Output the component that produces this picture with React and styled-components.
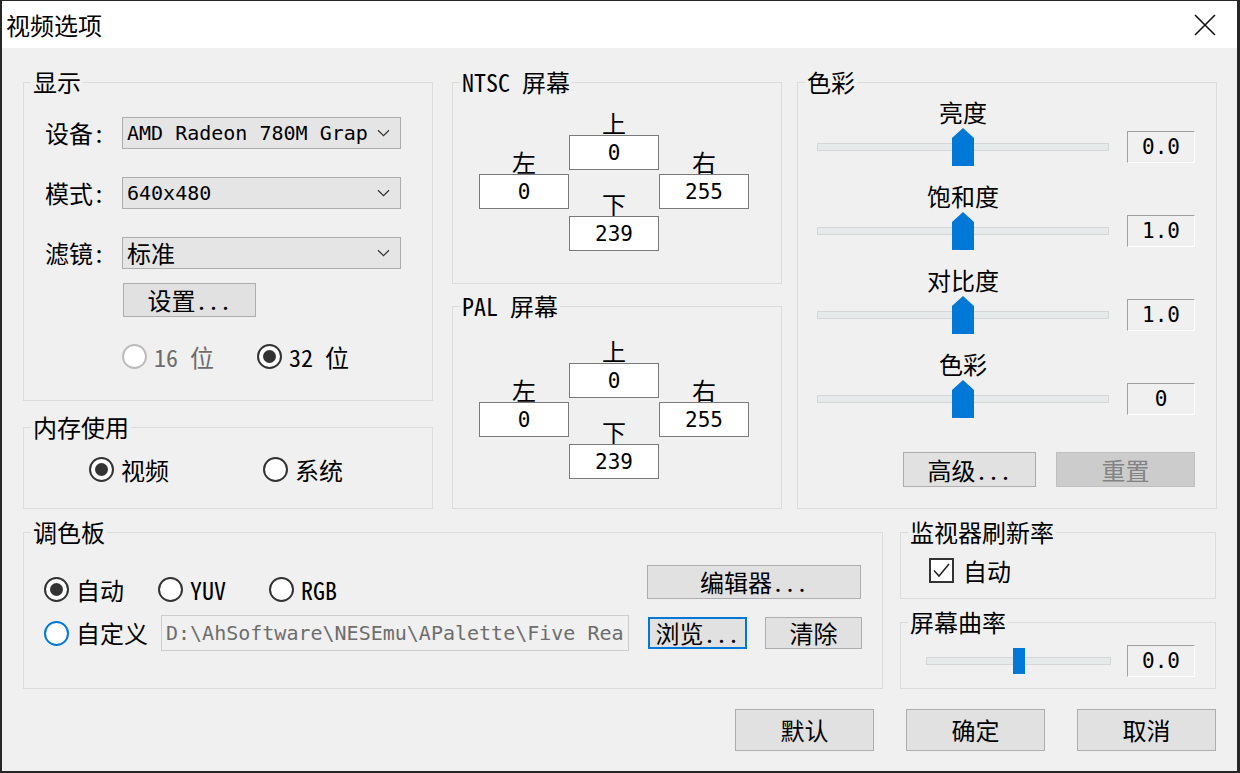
import React from "react";
import styled, { createGlobalStyle } from "styled-components";

const CJK = `"Noto Sans Mono CJK SC", "Noto Sans CJK SC", "DejaVu Sans Mono", monospace`;
const MONO = `"DejaVu Sans Mono", "Liberation Mono", monospace`;

const GlobalStyle = createGlobalStyle`
  *, *::before, *::after { box-sizing: border-box; }
  html, body { margin: 0; padding: 0; background: #262626; }
  #root { width: 1240px; height: 773px; }
`;

const Window = styled.div`
  width: 1240px;
  height: 773px;
  display: flex;
  flex-direction: column;
  background: #f0f0f0;
  border-style: solid;
  border-color: #262626;
  border-width: 1px 3px 2px 2px;
  font-family: ${CJK};
  font-size: 24px;
  line-height: 24px;
  color: #000;
`;

const TitleBar = styled.header`
  flex: none;
  height: 47px;
  display: flex;
  align-items: center;
  background: #fff;
  padding-left: 4px;
`;

const Caption = styled.h1`
  flex: 1;
  margin: 0;
  font: inherit;
`;

const CloseButton = styled.button`
  width: 64px;
  height: 47px;
  border: 0;
  padding: 0;
  background: transparent;
  display: flex;
  align-items: center;
  justify-content: center;
`;

const Content = styled.main`
  flex: 1;
  display: flex;
  flex-direction: column;
  padding: 22px 20px 0 21px;
`;

const Section = styled.div`
  display: flex;
  height: ${(p) => p.$height}px;
  margin-top: ${(p) => p.$mt || 0}px;
`;

const Column = styled.div`
  display: flex;
  flex-direction: column;
  width: ${(p) => p.$width}px;
  margin-left: ${(p) => p.$offset || 0}px;
  gap: ${(p) => p.$gap || 0}px;
`;

const Group = styled.fieldset`
  margin: 0;
  padding: 0;
  min-width: 0;
  border: 1px solid #dcdcdc;
  height: ${(p) => (p.$height ? `${p.$height}px` : "auto")};
  flex: ${(p) => (p.$height ? "none" : "1")};
`;

const Legend = styled.legend`
  margin-left: 7px;
  padding: 0 2px;
  line-height: 24px;
`;

const GroupBody = styled.div`
  display: flex;
  flex-direction: column;
  padding: ${(p) => p.$pad};
`;

/* ---------- generic controls ---------- */

const PushButton = styled.button`
  flex: none;
  width: ${(p) => p.$w}px;
  height: ${(p) => p.$h}px;
  margin: 0 0 0 ${(p) => p.$ml || 0}px;
  padding: 0;
  font: inherit;
  white-space: pre;
  color: ${(p) => (p.disabled ? "#838383" : "#000")};
  background: ${(p) => (p.disabled ? "#cccccc" : "#e1e1e1")};
  border: ${(p) =>
    p.$focused ? "2px solid #0078d7" : `1px solid ${p.disabled ? "#bfbfbf" : "#adadad"}`};
  display: flex;
  align-items: center;
  justify-content: center;
`;

const FieldRow = styled.div`
  display: flex;
  align-items: center;
  height: 32px;
  margin-top: ${(p) => p.$mt || 0}px;
`;

const FieldLabel = styled.span`
  width: 77px;
  flex: none;
`;

const Select = styled.div`
  width: 279px;
  height: 32px;
  display: flex;
  align-items: center;
  padding: 0 10px 0 4px;
  background: #e5e5e5;
  border: 1px solid #adadad;
`;

const SelectText = styled.span`
  flex: 1;
  white-space: pre;
  font-family: ${(p) => (p.$mono ? MONO : "inherit")};
  font-size: ${(p) => (p.$mono ? "20px" : "inherit")};
`;

const Chevron = () => (
  <svg width="13" height="8" viewBox="0 0 13 8">
    <path d="M1 1.2 L6.5 6.6 L12 1.2" fill="none" stroke="#333" strokeWidth="1.2" />
  </svg>
);

const RadioRow = styled.div`
  display: flex;
  align-items: center;
  margin: ${(p) => p.$margin || 0};
`;

const RadioItem = styled.label`
  flex: none;
  display: inline-flex;
  align-items: center;
  gap: 7px;
  width: ${(p) => (p.$w ? `${p.$w}px` : "auto")};
  white-space: pre;
  color: ${(p) => (p.$disabled ? "#6d6d6d" : "#000")};
`;

const RadioCircle = styled.span`
  flex: none;
  width: 25px;
  height: 25px;
  border-radius: 50%;
  background: #fff;
  border: 2px solid
    ${(p) => (p.$disabled ? "#bcbcbc" : p.$focus ? "#0078d7" : "#333")};
  display: flex;
  align-items: center;
  justify-content: center;

  &::after {
    content: "";
    width: 13px;
    height: 13px;
    border-radius: 50%;
    background: #333;
    display: ${(p) => (p.$checked ? "block" : "none")};
  }
`;

const Radio = ({ label, checked, disabled, focus, w }) => (
  <RadioItem $w={w} $disabled={disabled}>
    <RadioCircle $checked={checked} $disabled={disabled} $focus={focus} />
    {label}
  </RadioItem>
);

const CheckItem = styled.label`
  display: inline-flex;
  align-items: center;
  gap: 9px;
`;

const CheckBox = styled.span`
  width: 25px;
  height: 25px;
  border: 2px solid #333;
  background: #fff;
  display: flex;
  align-items: center;
  justify-content: center;
`;

/* ---------- screen offsets ---------- */

const Offsets = styled.div`
  display: flex;
  padding: ${(p) => p.$top}px 0 0 26px;
`;

const OffsetColumn = styled.div`
  width: 90px;
  display: flex;
  flex-direction: column;
  padding-top: ${(p) => (p.$side ? 39 : 0)}px;
`;

const OffsetLabel = styled.div`
  height: 24px;
  text-align: center;
  margin-top: ${(p) => p.$mt || 0}px;
`;

const OffsetField = styled.div`
  height: 35px;
  background: #fff;
  border: 1px solid #7a7a7a;
  display: flex;
  align-items: center;
  justify-content: center;
  font-family: ${MONO};
  font-size: 21px;
`;

/* ---------- sliders ---------- */

const SliderBlock = styled.div`
  display: flex;
  flex-direction: column;
  margin-bottom: 18px;
`;

const SliderCaption = styled.div`
  width: ${(p) => p.$w}px;
  height: 24px;
  margin-bottom: 4px;
  text-align: center;
`;

const SliderRow = styled.div`
  display: flex;
  align-items: center;
  height: ${(p) => p.$h}px;
  gap: ${(p) => p.$gap}px;
`;

const Track = styled.div`
  position: relative;
  flex: none;
  width: ${(p) => p.$w}px;
  height: 8px;
  background: #e7eaea;
  border: 1px solid #d6d6d6;
`;

const Thumb = styled.div`
  position: absolute;
  top: 50%;
  transform: translate(-50%, -50%);
  background: #0078d7;
  width: ${(p) => (p.$pointer ? 22 : 12)}px;
  height: ${(p) => (p.$pointer ? 38 : 26)}px;
  clip-path: ${(p) =>
    p.$pointer
      ? "polygon(50% 0, 100% 10px, 100% 100%, 0 100%, 0 10px)"
      : "none"};
`;

const ValueBox = styled.div`
  flex: none;
  width: 68px;
  height: 32px;
  border-style: solid;
  border-width: 1px;
  border-color: #a0a0a0 #fff #fff #a0a0a0;
  display: flex;
  align-items: center;
  justify-content: center;
  font-family: ${MONO};
  font-size: 21px;
`;

const ButtonRow = styled.div`
  display: flex;
  justify-content: flex-end;
  gap: ${(p) => p.$gap}px;
  margin-top: ${(p) => p.$mt || 0}px;
  margin-right: ${(p) => p.$mr || 0}px;
`;

const PaletteRow = styled.div`
  display: flex;
  align-items: ${(p) => p.$align || "center"};
  height: 36px;
  margin-top: ${(p) => p.$mt || 0}px;
`;

const PathField = styled.div`
  flex: none;
  width: 468px;
  height: 36px;
  display: flex;
  align-items: center;
  padding-left: 4px;
  border: 1px solid #cccccc;
  background: #f0f0f0;
  color: #6d6d6d;
  font-family: ${MONO};
  font-size: 20px;
  white-space: pre;
  overflow: hidden;
`;

const Spacer = styled.div`
  flex: 1;
`;

const ScreenOffsets = ({ top, values }) => (
  <Offsets $top={top}>
    <OffsetColumn $side>
      <OffsetLabel>左</OffsetLabel>
      <OffsetField>{values.left}</OffsetField>
    </OffsetColumn>
    <OffsetColumn>
      <OffsetLabel>上</OffsetLabel>
      <OffsetField>{values.top}</OffsetField>
      <OffsetLabel $mt={22}>下</OffsetLabel>
      <OffsetField>{values.bottom}</OffsetField>
    </OffsetColumn>
    <OffsetColumn $side>
      <OffsetLabel>右</OffsetLabel>
      <OffsetField>{values.right}</OffsetField>
    </OffsetColumn>
  </Offsets>
);

const colorSliders = [
  { label: "亮度", value: "0.0", pos: 50 },
  { label: "饱和度", value: "1.0", pos: 50 },
  { label: "对比度", value: "1.0", pos: 50 },
  { label: "色彩", value: "0", pos: 50 },
];

const screen = { left: "0", top: "0", right: "255", bottom: "239" };

export default function App() {
  return (
    <>
      <GlobalStyle />
      <Window>
        <TitleBar>
          <Caption>视频选项</Caption>
          <CloseButton aria-label="关闭">
            <svg width="22" height="22" viewBox="0 0 22 22">
              <path d="M1 1 L21 21 M21 1 L1 21" stroke="#111" strokeWidth="1.6" />
            </svg>
          </CloseButton>
        </TitleBar>

        <Content>
          <Section $height={439}>
            <Column $width={410} $gap={14}>
              <Group $height={331}>
                <Legend>显示</Legend>
                <GroupBody $pad="23px 0 0 21px">
                  <FieldRow>
                    <FieldLabel>设备:</FieldLabel>
                    <Select>
                      <SelectText $mono>AMD Radeon 780M Grap</SelectText>
                      <Chevron />
                    </Select>
                  </FieldRow>
                  <FieldRow $mt={28}>
                    <FieldLabel>模式:</FieldLabel>
                    <Select>
                      <SelectText $mono>640x480</SelectText>
                      <Chevron />
                    </Select>
                  </FieldRow>
                  <FieldRow $mt={28}>
                    <FieldLabel>滤镜:</FieldLabel>
                    <Select>
                      <SelectText>标准</SelectText>
                      <Chevron />
                    </Select>
                  </FieldRow>
                  <RadioRow $margin="14px 0 0 78px">
                    <PushButton $w={133} $h={34}>设置...</PushButton>
                  </RadioRow>
                  <RadioRow $margin="27px 0 0 77px">
                    <Radio label="16 位" disabled w={135} />
                    <Radio label="32 位" checked />
                  </RadioRow>
                </GroupBody>
              </Group>
              <Group>
                <Legend>内存使用</Legend>
                <RadioRow $margin="18px 0 0 65px">
                  <Radio label="视频" checked w={174} />
                  <Radio label="系统" />
                </RadioRow>
              </Group>
            </Column>

            <Column $width={330} $offset={19} $gap={10}>
              <Group $height={214}>
                <Legend>NTSC 屏幕</Legend>
                <ScreenOffsets top={17} values={screen} />
              </Group>
              <Group>
                <Legend>PAL 屏幕</Legend>
                <ScreenOffsets top={21} values={screen} />
              </Group>
            </Column>

            <Column $width={420} $offset={15}>
              <Group>
                <Legend>色彩</Legend>
                <GroupBody $pad="6px 21px 0 19px">
                  {colorSliders.map((s) => (
                    <SliderBlock key={s.label}>
                      <SliderCaption $w={292}>{s.label}</SliderCaption>
                      <SliderRow $h={38} $gap={18}>
                        <Track $w={292}>
                          <Thumb $pointer style={{ left: `${s.pos}%` }} />
                        </Track>
                        <ValueBox>{s.value}</ValueBox>
                      </SliderRow>
                    </SliderBlock>
                  ))}
                  <ButtonRow $gap={20} $mt={16}>
                    <PushButton $w={133} $h={35}>高级...</PushButton>
                    <PushButton $w={139} $h={35} disabled>
                      重置
                    </PushButton>
                  </ButtonRow>
                </GroupBody>
              </Group>
            </Column>
          </Section>

          <Section $height={169} $mt={11}>
            <Column $width={860}>
              <Group>
                <Legend>调色板</Legend>
                <GroupBody $pad="21px 21px 0 20px">
                  <PaletteRow $align="flex-start">
                    <RadioRow $margin="12px 0 0 0">
                      <Radio label="自动" checked w={114} />
                      <Radio label="YUV" w={111} />
                      <Radio label="RGB" />
                    </RadioRow>
                    <Spacer />
                    <PushButton $w={214} $h={34}>编辑器...</PushButton>
                  </PaletteRow>
                  <PaletteRow $mt={14}>
                    <Radio label="自定义" focus w={117} />
                    <PathField>D:\AhSoftware\NESEmu\APalette\Five Rea</PathField>
                    <PushButton $w={99} $h={32} $ml={19} $focused>
                      浏览...
                    </PushButton>
                    <PushButton $w={97} $h={32} $ml={18}>
                      清除
                    </PushButton>
                  </PaletteRow>
                </GroupBody>
              </Group>
            </Column>
            <Column $width={316} $offset={17} $gap={11}>
              <Group>
                <Legend>监视器刷新率</Legend>
                <GroupBody $pad="14px 0 0 28px">
                  <CheckItem>
                    <CheckBox>
                      <svg width="19" height="19" viewBox="0 0 19 19">
                        <path d="M2 9.5 L7 15 L17 3" fill="none" stroke="#222" strokeWidth="1.5" />
                      </svg>
                    </CheckBox>
                    自动
                  </CheckItem>
                </GroupBody>
              </Group>
              <Group>
                <Legend>屏幕曲率</Legend>
                <GroupBody $pad="11px 20px 0 25px">
                  <SliderRow $h={32} $gap={16}>
                    <Track $w={185}>
                      <Thumb style={{ left: "50%" }} />
                    </Track>
                    <ValueBox>0.0</ValueBox>
                  </SliderRow>
                </GroupBody>
              </Group>
            </Column>
          </Section>

          <ButtonRow $gap={32} $mt={20} $mr={1}>
            <PushButton $w={139} $h={42}>默认</PushButton>
            <PushButton $w={139} $h={42}>确定</PushButton>
            <PushButton $w={139} $h={42}>取消</PushButton>
          </ButtonRow>
        </Content>
      </Window>
    </>
  );
}
